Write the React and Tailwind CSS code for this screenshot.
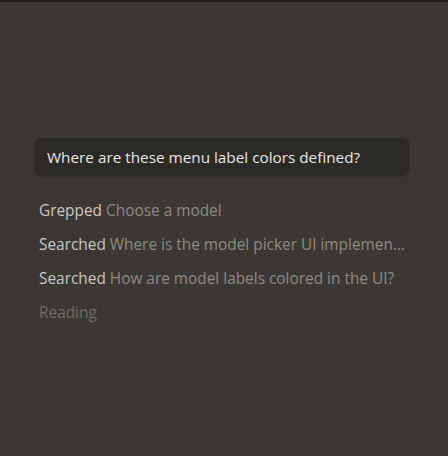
export default function App() {
  const rows = [
    { label: "Grepped", detail: "Choose a model" },
    { label: "Searched", detail: "Where is the model picker UI implemented and where are its styles defined?" },
    { label: "Searched", detail: "How are model labels colored in the UI?" },
  ];
  return (
    <div className="w-[448px] h-[456px] bg-[#3b3833] flex flex-col" style={{ fontFamily: '"Open Sans", "Noto Sans", sans-serif' }}>
      <div className="h-[2px] bg-[#1e1d1a]" />
      <div className="pl-[34px] pr-[38px] pt-[135px] flex flex-col">
        <div className="h-[40px] rounded-[8px] bg-[#2c2a26] border border-[#34312d] flex items-center px-[12px] text-[15.3px] text-[#e8e6e2]">
          Where are these menu label colors defined?
        </div>
        <div className="mt-[23px] flex flex-col gap-[12px] pl-[5px] text-[15.4px]">
          {rows.map((r, i) => (
            <div key={i} className="h-[22px] leading-[22px] truncate text-[#8d8a85]">
              <span className="text-[#c9c6c1]">{r.label}</span>{" "}
              <span className="text-[#8d8a85]">{r.detail}</span>
            </div>
          ))}
          <div className="h-[22px] leading-[22px] text-[#6f6c67]">Reading</div>
        </div>
      </div>
    </div>
  );
}
